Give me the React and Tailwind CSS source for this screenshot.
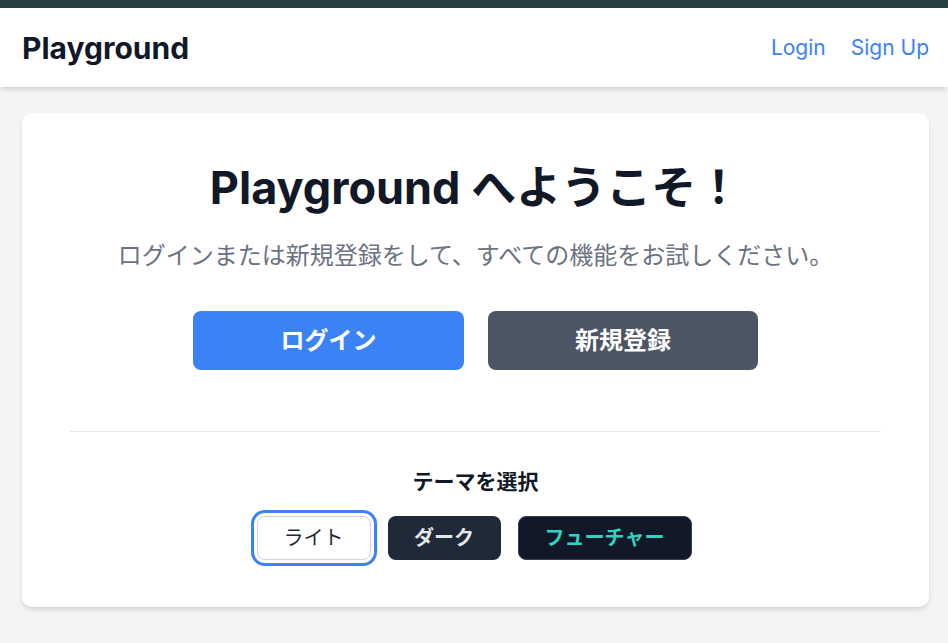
const FONT = { fontFamily: 'Inter, "Noto Sans CJK JP", sans-serif' };

export default function App() {
  return (
    <div className="min-h-[643px] bg-[#f3f4f6]" style={FONT}>
      <div className="h-2 bg-[#283f45]" />
      <header className="bg-white shadow-md h-[79px] flex items-center justify-between pl-[22px] pr-[19px]">
        <h1 className="text-[30px] leading-9 font-bold text-[#111827]">Playground</h1>
        <nav className="flex items-center gap-[25px] text-[21px] text-[#3b82f6]">
          <a href="#">Login</a>
          <a href="#">Sign Up</a>
        </nav>
      </header>

      <main className="pl-[22px] pr-[19px] pt-[26px]">
        <div className="bg-white rounded-[10px] shadow-md px-12 pt-[50px] pb-[47px] text-center">
          <h2 className="text-[45px] leading-[50px] font-bold text-[#111827]">Playground へようこそ！</h2>
          <p className="mt-[27px] text-2xl leading-8 text-[#6b7280]">ログインまたは新規登録をして、すべての機能をお試しください。</p>

          <div className="mt-[39px] flex justify-center gap-6">
            <button className="w-[271px] h-[59px] rounded-lg bg-[#3b82f6] text-white text-2xl font-bold">ログイン</button>
            <button className="w-[270px] h-[59px] rounded-lg bg-[#4b5563] text-white text-2xl font-bold">新規登録</button>
          </div>

          <hr className="mt-[61px] border-[#e5e7eb]" />

          <div className="mt-[36px]">
            <p className="text-[21px] leading-7 font-bold text-[#111827]">テーマを選択</p>
            <div className="mt-5 flex justify-center gap-[17px] pr-[3px]">
              <button className="w-[114px] h-[44px] rounded-lg bg-white border border-[#d1d5db] text-[#1f2937] text-xl ring-[3px] ring-[#3b82f6] ring-offset-[3px]">ライト</button>
              <button className="w-[113px] h-[44px] rounded-lg bg-[#1f2937] text-[#e5e7eb] text-xl font-bold">ダーク</button>
              <button className="w-[174px] h-[44px] rounded-lg bg-[#111827] border border-[#374151] text-[#2dd4bf] text-xl font-bold">フューチャー</button>
            </div>
          </div>
        </div>
      </main>
    </div>
  );
}
